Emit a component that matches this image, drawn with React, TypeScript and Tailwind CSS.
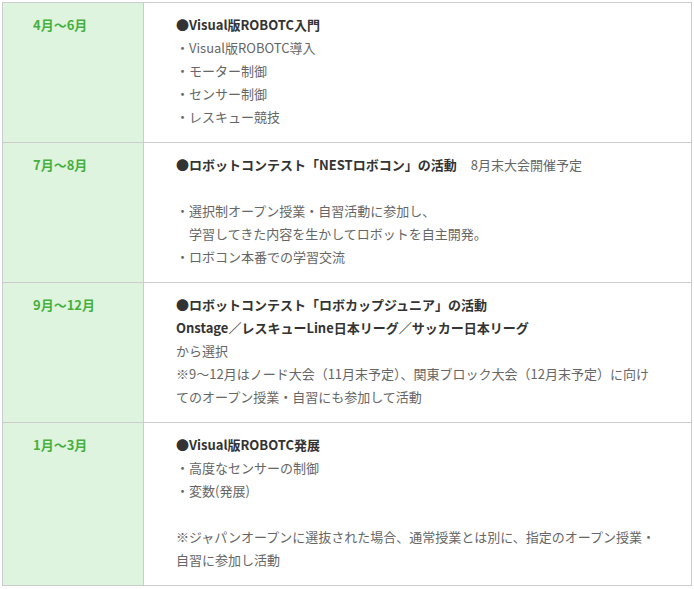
const ROWS: { term: string; body: React.ReactNode }[] = [
  {
    term: '4月～6月',
    body: (
      <>
        <p className="font-bold text-[#333]">●Visual版ROBOTC入門</p>
        <p>・Visual版ROBOTC導入</p>
        <p>・モーター制御</p>
        <p>・センサー制御</p>
        <p>・レスキュー競技</p>
      </>
    ),
  },
  {
    term: '7月～8月',
    body: (
      <>
        <p>
          <span className="font-bold text-[#333]">●ロボットコンテスト「NESTロボコン」の活動</span>
          <span className="ml-[14px]">8月末大会開催予定</span>
        </p>
        <p>&nbsp;</p>
        <p>・選択制オープン授業・自習活動に参加し、</p>
        <p>{'　'}学習してきた内容を生かしてロボットを自主開発。</p>
        <p>・ロボコン本番での学習交流</p>
      </>
    ),
  },
  {
    term: '9月～12月',
    body: (
      <>
        <p className="font-bold text-[#333]">●ロボットコンテスト「ロボカップジュニア」の活動</p>
        <p className="font-bold text-[#333]">Onstage／レスキューLine日本リーグ／サッカー日本リーグ</p>
        <p>から選択</p>
        <p>
          ※9～12月はノード大会（11月末予定）、関東ブロック大会（12月末予定）に向け
          <br />
          てのオープン授業・自習にも参加して活動
        </p>
      </>
    ),
  },
  {
    term: '1月～3月',
    body: (
      <>
        <p className="font-bold text-[#333]">●Visual版ROBOTC発展</p>
        <p>・高度なセンサーの制御</p>
        <p>・変数(発展)</p>
        <p>&nbsp;</p>
        <p>
          ※ジャパンオープンに選抜された場合、通常授業とは別に、指定のオープン授業・
          <br />
          自習に参加し活動
        </p>
      </>
    ),
  },
]

export default function App() {
  return (
    <div className="bg-white pt-[2px] pl-[2px] font-['Noto_Sans_CJK_JP','Noto_Sans',sans-serif] text-[13px] leading-[23px]">
      <div className="grid w-[690px] grid-cols-[141px_548px] border-t border-l border-[#ccc]">
        {ROWS.map(r => (
          <div key={r.term} className="contents">
            <div className="border-r border-b border-[#ccc] bg-[#dff4df] pl-[30px] pt-[10px] font-bold text-[#45b03c]">
              {r.term}
            </div>
            <div className="border-r border-b border-[#ccc] pl-[32px] pt-[10px] pb-[14px] text-[#666] whitespace-nowrap">
              {r.body}
            </div>
          </div>
        ))}
      </div>
    </div>
  )
}
